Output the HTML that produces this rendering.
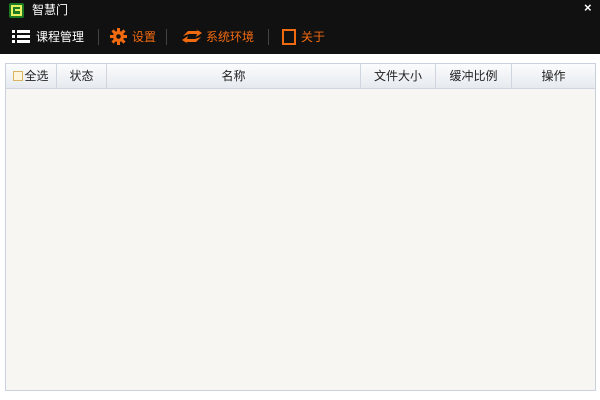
<!DOCTYPE html>
<html><head><meta charset="utf-8"><style>
*{margin:0;padding:0;box-sizing:border-box}
body{width:600px;height:400px;background:#fff;font-family:"Liberation Sans","Noto Sans CJK SC",sans-serif;font-size:12px;position:relative;overflow:hidden}
#top{position:absolute;left:0;top:0;width:600px;height:54px;background:#111}
.t{position:absolute;color:#fff;font-size:12px;white-space:nowrap;line-height:16px}
.o{color:#f26a10}
.sep{position:absolute;top:29px;width:1px;height:16px;background:#444}
#tbl{position:absolute;left:5px;top:63px;width:591px;height:328px;border:1px solid #c9d1dc;background:#f7f6f2}
#hd{position:absolute;left:0;top:0;width:589px;height:25px;background:linear-gradient(#fbfcfd,#e6eaef);border-bottom:1px solid #cfd6df}
.c{position:absolute;top:0;height:24px;line-height:24px;text-align:center;color:#222;font-size:12px;border-right:1px solid #cfd6df}
</style></head><body>
<div id="top">
 <svg style="position:absolute;left:9px;top:3px" width="15" height="15"><rect width="15" height="15" rx="2" fill="#1d7a24"/><rect x="3" y="3" width="9" height="9" fill="none" stroke="#e8f060" stroke-width="2"/><rect x="6" y="6" width="6" height="2" fill="#e8f060"/></svg>
 <div class="t" style="left:32px;top:2px">智慧门</div>
 <div class="t" style="left:584px;top:0px;font-weight:bold;font-size:13px">×</div>
 <svg style="position:absolute;left:12px;top:30px" width="18" height="14"><rect x="0" y="0" width="3" height="3" fill="#fff"/><rect x="5" y="0" width="13" height="3" fill="#fff"/><rect x="0" y="5" width="3" height="3" fill="#fff"/><rect x="5" y="5" width="13" height="3" fill="#fff"/><rect x="0" y="10" width="3" height="3" fill="#fff"/><rect x="5" y="10" width="13" height="3" fill="#fff"/></svg>
 <div class="t" style="left:36px;top:29px">课程管理</div>
 <div class="sep" style="left:98px"></div>
 <svg style="position:absolute;left:110px;top:28px" width="17" height="17" viewBox="0 0 17 17"><g fill="#f26a10"><circle cx="8.5" cy="8.5" r="5.5"/><rect x="7" y="0" width="3" height="17"/><rect x="0" y="7" width="17" height="3"/><rect x="7" y="0" width="3" height="17" transform="rotate(45 8.5 8.5)"/><rect x="7" y="0" width="3" height="17" transform="rotate(-45 8.5 8.5)"/></g><circle cx="8.5" cy="8.5" r="2.3" fill="#111"/></svg>
 <div class="t o" style="left:132px;top:29px">设置</div>
 <div class="sep" style="left:166px"></div>
 <svg style="position:absolute;left:182px;top:29px" width="20" height="15" viewBox="0 0 20 15"><path d="M1 7 L6 2 L16 2 L14 0 L20 4 L14 8 L15 5 L7 5 Z" fill="#f26a10"/><path d="M19 8 L14 13 L4 13 L6 15 L0 11 L6 7 L5 10 L13 10 Z" fill="#f26a10"/></svg>
 <div class="t o" style="left:206px;top:29px">系统环境</div>
 <div class="sep" style="left:268px"></div>
 <svg style="position:absolute;left:282px;top:29px" width="14" height="16"><rect x="1" y="1" width="12" height="14" fill="none" stroke="#f26a10" stroke-width="2"/></svg>
 <div class="t o" style="left:301px;top:29px">关于</div>
</div>
<div id="tbl">
 <div id="hd">
  <div class="c" style="left:0;width:51px"><span style="display:inline-block;width:10px;height:10px;border:1px solid #d8b660;background:#fdf6dc;vertical-align:-1px;margin-right:1px"></span>全选</div>
  <div class="c" style="left:51px;width:50px">状态</div>
  <div class="c" style="left:101px;width:254px">名称</div>
  <div class="c" style="left:355px;width:75px">文件大小</div>
  <div class="c" style="left:430px;width:76px">缓冲比例</div>
  <div class="c" style="left:506px;width:83px;border-right:none">操作</div>
 </div>
</div>
</body></html>
